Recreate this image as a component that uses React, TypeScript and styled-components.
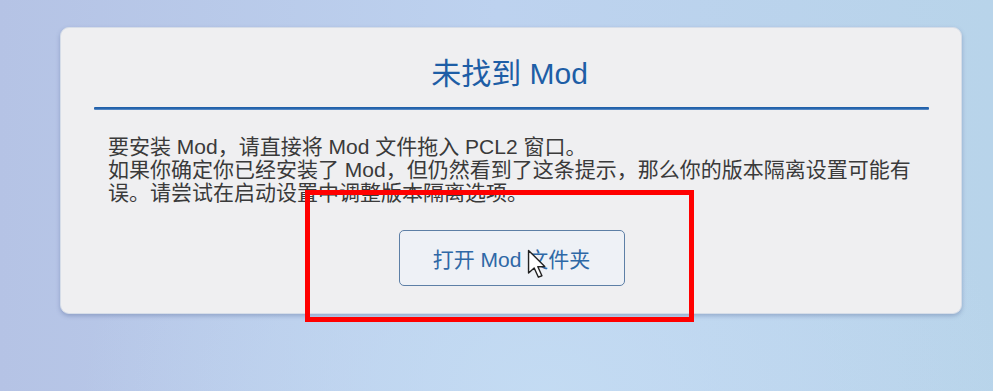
import styled, { createGlobalStyle } from 'styled-components';

const GlobalStyle = createGlobalStyle`
  html, body {
    margin: 0;
    padding: 0;
  }
  body {
    font-family: "Liberation Sans", "Noto Sans CJK SC", sans-serif;
  }
`;

export default function App() {
  return (
    <Page>
      <GlobalStyle />
      <Card>
        <Title>未找到 Mod</Title>
        <Divider />
        <Message>
          <p>要安装 Mod，请直接将 Mod 文件拖入 PCL2 窗口。</p>
          <p>
            如果你确定你已经安装了 Mod，但仍然看到了这条提示，那么你的版本隔离设置可能有误。请尝试在启动设置中调整版本隔离选项。
          </p>
        </Message>
        <ButtonRow>
          <OpenButton>打开 Mod 文件夹</OpenButton>
        </ButtonRow>
      </Card>
      <Highlight />
      <Cursor viewBox="0 0 14 22" width="20" height="31">
        <path
          d="M1 1 L1 17 L5 13.5 L8 20 L10.5 19 L7.6 12.6 L12.5 12.4 Z"
          fill="#fff"
          stroke="#222"
          strokeWidth="1"
          strokeLinejoin="round"
        />
      </Cursor>
    </Page>
  );
}

const Page = styled.div`
  position: relative;
  width: 993px;
  height: 391px;
  overflow: hidden;
  padding-top: 27px;
  box-sizing: border-box;
  background:
    radial-gradient(ellipse at 55% 100%, rgba(196, 220, 243, 0.9), rgba(196, 220, 243, 0) 60%),
    linear-gradient(90deg, #b5c3e5 0%, #bdd2ef 50%, #b8d4ea 100%);
`;

const Card = styled.div`
  margin-left: 60px;
  width: 902px;
  height: 287px;
  box-sizing: border-box;
  padding: 26px 32px 0 33px;
  display: flex;
  flex-direction: column;
  background: #efeff1;
  border: 1px solid #d6dde8;
  border-radius: 9px;
  box-shadow: 0 2px 4px rgba(70, 90, 140, 0.35);

  & > * {
    flex-shrink: 0;
  }
`;

const Title = styled.div`
  height: 40px;
  line-height: 40px;
  text-align: center;
  font-size: 30px;
  color: #1e5ea6;
  padding-right: 4px;
`;

const Divider = styled.div`
  margin-top: 13px;
  height: 3px;
  background: linear-gradient(180deg, #1d5ca7 0%, #2b69b0 60%, #6f9ad0 100%);
  border-radius: 1px;
`;

const Message = styled.div`
  margin-top: 25px;
  padding-left: 14px;
  width: 815px;
  font-size: 21px;
  line-height: 23px;
  color: #3a3a3a;

  p {
    margin: 0;
  }
`;

const ButtonRow = styled.div`
  margin-top: 26px;
  display: flex;
  justify-content: center;
`;

const OpenButton = styled.button`
  width: 226px;
  height: 56px;
  border: 1px solid #5d7fa6;
  border-radius: 5px;
  background: #eef1f6;
  color: #2e68a6;
  font-family: "Liberation Sans", "Noto Sans CJK SC", sans-serif;
  font-size: 21px;
  cursor: pointer;
`;

const Highlight = styled.div`
  position: absolute;
  left: 305px;
  top: 190px;
  width: 389px;
  height: 132px;
  box-sizing: border-box;
  border: 5px solid #f00;
`;

const Cursor = styled.svg`
  position: absolute;
  left: 527px;
  top: 249px;
`;
